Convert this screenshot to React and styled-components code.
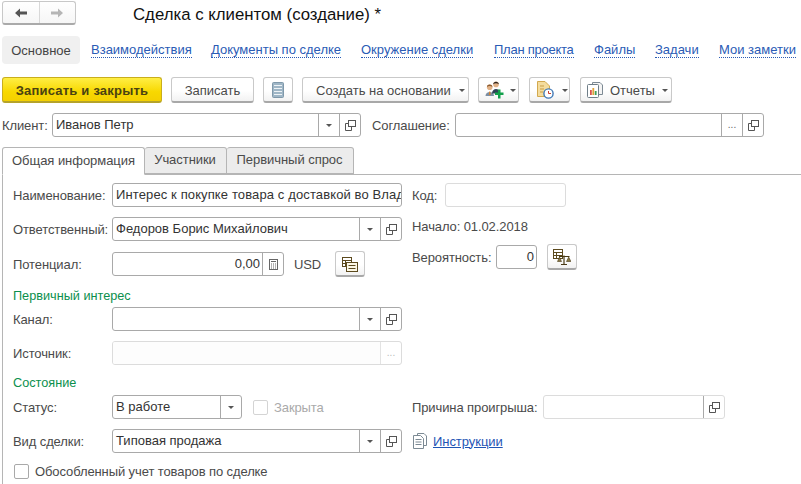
import React from "react";
import styled, { createGlobalStyle, css } from "styled-components";

const Global = createGlobalStyle`
  html, body { margin: 0; padding: 0; background: #fff; }
  body { font-family: "Liberation Sans", Arial, sans-serif; font-size: 13px; color: #4a4a4a; }
  #root { width: 801px; height: 484px; overflow: hidden; }
`;

const Page = styled.div`
  width: 801px; height: 484px; overflow: hidden; display: flex; flex-direction: column; padding: 1px 0 0 2px; box-sizing: border-box;
`;
const Header = styled.header`
  display: flex; align-items: center; height: 24px;
`;
const NavPair = styled.div`
  display: flex; width: 74px; height: 24px; box-sizing: border-box; border: 1px solid #c8c8c8; border-bottom: 2px solid #aaa; border-radius: 3px;
  background: linear-gradient(#fff, #f6f6f6);
`;
const NavCell = styled.div`
  flex: 1; display: flex; align-items: center; justify-content: center;
  ${p => p.$divider && css`border-right: 1px solid #d8d8d8;`}
`;
const Title = styled.h1`
  margin: 0 0 0 57px; font-size: 16.8px; font-weight: 400; color: #111; white-space: nowrap; position: relative; top: 2px;
`;
const Nav = styled.nav`
  display: flex; align-items: center; height: 28px; margin-top: 11px;
`;
const ActivePage = styled.div`
  width: 78px; height: 28px; margin-right: 11px; background: #f0f0f0; border-radius: 4px; display: flex; align-items: center; justify-content: center; color: #444; font-size: 13px; flex: none;
`;
const NavItem = styled.div`
  width: ${p => p.$w}px; flex: none;
`;
const NavLink = styled.a`
  display: inline-block; color: #2a5bb5; font-size: 13px; white-space: nowrap; line-height: 14px; border-bottom: 1px dotted #2a5bb5; letter-spacing: ${p => p.$ls || 0}px;
`;
const Toolbar = styled.div`
  display: flex; align-items: flex-start; height: 26px; margin-top: 13px;
`;
const Btn = styled.button`
  box-sizing: border-box; width: ${p => p.$w}px; height: ${p => p.$h || 26}px; margin-left: ${p => p.$ml || 0}px; flex: none;
  padding: 1px 0 0 ${p => p.$pl || 0}px;
  display: flex; align-items: center; justify-content: ${p => p.$pl ? "flex-start" : "center"}; gap: ${p => p.$gap || 0}px;
  font: 13px "Liberation Sans", Arial, sans-serif; color: #4a4a4a; white-space: nowrap;
  border: 1px solid #c9c9c9; border-bottom: 2px solid #a8a8a8; border-radius: 3px;
  background: linear-gradient(#fff 55%, #f2f2f2);
`;
const Primary = styled(Btn)`
  font-weight: 700; color: #4a4212; letter-spacing: .2px; border: 1px solid #c9ae1c; border-bottom: 2px solid #b5a32a;
  background: linear-gradient(#ffee45, #f8d800 60%, #f4d000);
`;
const Caret = styled.span`
  width: 0; height: 0; border-left: 3.5px solid transparent; border-right: 3.5px solid transparent; border-top: 3.5px solid ${p => p.$c || "#555"}; flex: none;
`;
const TopFields = styled.div`
  display: flex; align-items: center; height: 24px; margin-top: 10px;
`;
const Label = styled.span`
  color: #4a4a4a; font-size: 13px; letter-spacing: -.1px; white-space: nowrap; flex: none; width: ${p => p.$w ? p.$w + "px" : "auto"};
  margin-left: ${p => p.$ml || 0}px; ${p => p.$faded && "color:#aaa;"}
`;
const Field = styled.div`
  box-sizing: border-box; display: flex; width: ${p => p.$w}px; height: 24px; flex: none; margin-left: ${p => p.$ml || 0}px;
  border: 1px solid ${p => p.$disabled ? "#dcdcdc" : "#a9a9a9"}; border-radius: 3px; background: #fff; overflow: hidden;
`;
const Value = styled.div`
  flex: 1; min-width: 0; padding: 0 ${p => p.$right ? 2 : 0}px 0 3px; line-height: 22px; color: #333; font-size: 13px; white-space: nowrap; overflow: hidden;
  letter-spacing: ${p => p.$ls || 0}px;
  text-align: ${p => p.$right ? "right" : "left"}; ${p => p.$disabled && "background:#fdfdfd;"}
`;
const FieldBtn = styled.div`
  flex: none; width: 21px; display: flex; align-items: center; justify-content: center; border-left: 1px solid ${p => p.$faded ? "#e3e3e3" : "#a9a9a9"};
  color: ${p => p.$faded ? "#bbb" : "#666"}; font-size: 10px; line-height: 26px; box-sizing: border-box;
`;
const Tabs = styled.div`
  display: flex; align-items: flex-end; height: 28px; margin-top: 10px; border-bottom: 1px solid #b5b5b5; box-sizing: border-box;
`;
const Tab = styled.div`
  box-sizing: border-box; width: ${p => p.$w}px; height: ${p => p.$active ? 28 : 27}px; display: flex; align-items: center; justify-content: center; color: #4a4a4a; font-size: 13px; letter-spacing: -.05px;
  border: 1px solid #b5b5b5; border-left-width: ${p => p.$first ? 1 : 0}px; border-radius: 3px 3px 0 0; padding: 0 ${p => p.$first ? 0 : 1}px 2px 0; white-space: nowrap;
  background: ${p => p.$active ? "#fff" : "#ececec"}; ${p => p.$active && "border-bottom: 1px solid #fff; margin-bottom: -1px;"}
`;
const Panel = styled.div`
  flex: 1; display: flex; border-left: 1px solid #b5b5b5; padding: 8px 0 0 10px;
`;
const LeftCol = styled.div`
  width: 390px; flex: none; display: flex; flex-direction: column;
`;
const RightCol = styled.div`
  flex: 1; display: flex; flex-direction: column; padding-left: 9px;
`;
const Row = styled.div`
  display: flex; align-items: center; height: ${p => p.$h || 24}px; margin-top: ${p => p.$mt || 0}px;
`;
const Group = styled.div`
  color: #0b8f4d; font-size: 12.7px; line-height: 14px; margin-top: ${p => p.$mt}px;
`;
const Check = styled.span`
  box-sizing: border-box; width: 15px; height: 15px; flex: none; border: 1px solid ${p => p.$faded ? "#d4d4d4" : "#a9a9a9"}; border-radius: 2px; background: #fff; margin-left: ${p => p.$ml || 0}px; margin-right: 6px;
`;
const DocIconSlot = styled.span`
  display: flex; margin-left: 1px;
`;
const DocLink = styled.a`
  color: #1f55b5; font-size: 13px; letter-spacing: -.05px; text-decoration: underline; margin-left: 6px;
`;

const Arrow = ({ dir, color }) => (
  <svg width="14" height="12" viewBox="0 0 14 12" style={{ transform: dir === "r" ? "scaleX(-1)" : "none" }}>
    <path d="M1 6 L6 1.5 V4.5 H13 V7.5 H6 V10.5 Z" fill={color} />
  </svg>
);
const OpenIcon = ({ c = "#555" }) => (
  <svg width="11" height="11" viewBox="0 0 11 11" fill="none" stroke={c}>
    <rect x="3.5" y="0.5" width="7" height="6" fill="#fff" />
    <path d="M3 3.5 H0.5 V10.5 H6.5 V7" />
  </svg>
);
const ListIcon = () => (
  <svg width="12" height="16" viewBox="0 0 12 16">
    <rect x="0.5" y="0.5" width="11" height="15" rx="1" fill="#9fb6c6" stroke="#7f98aa" />
    <path d="M2 3.5H10M2 6.5H10M2 9.5H10M2 12.5H10" stroke="#eef3f6" strokeWidth="1.2" />
  </svg>
);
const PeopleIcon = () => (
  <svg width="19" height="18" viewBox="0 0 19 18">
    <path d="M0.5 15 C0.5 9.5 9 9.5 9 15 Z" fill="#7d8fa3" />
    <path d="M4.2 10.5H5.3L5.6 14H3.9Z" fill="#d9822b" />
    <circle cx="4.7" cy="6.3" r="2.8" fill="#e2b287" />
    <path d="M2 6 C2 2.8 7.4 2.8 7.4 6 C6 4.8 3.5 4.8 2 6Z" fill="#8a5a2f" />
    <path d="M7 12.5 C7 6.5 15 6.5 15 12.5 Z" fill="#2f4358" />
    <circle cx="11" cy="3.4" r="2.8" fill="#e2b287" />
    <path d="M8.2 3.2 C8.2 -0.2 13.8 -0.2 13.8 3.2 C12.3 2 9.7 2 8.2 3.2Z" fill="#2b2420" />
    <path d="M10 11.6H13V8.6H15.5V11.6H18.5V14H15.5V17.5H13V14H10Z" fill="#12a04b" />
  </svg>
);
const DocClockIcon = () => (
  <svg width="17" height="18" viewBox="0 0 17 18">
    <path d="M0.5 0.5H8L12.5 5V15.5H0.5Z" fill="#f4dc9d" stroke="#d2a94f" />
    <path d="M3 5H7M3 8H7M3 11H6" stroke="#c99d45" />
    <circle cx="11.5" cy="12.5" r="4.6" fill="#fff" stroke="#3f78b5" strokeWidth="1.4" />
    <path d="M11.5 10V12.5H14" stroke="#c8402f" fill="none" />
  </svg>
);
const ReportIcon = () => (
  <svg width="16" height="16" viewBox="0 0 16 16">
    <path d="M5.5 0.5H13L15.5 3V12.5H5.5Z" fill="#f4f4f4" stroke="#7d8a94" />
    <rect x="0.5" y="2.5" width="11" height="13" rx="1" fill="#fff" stroke="#6f7e88" />
    <rect x="3" y="8" width="1.8" height="5" fill="#d9534f" />
    <rect x="5.4" y="6" width="1.8" height="7" fill="#e0a33a" />
    <rect x="7.8" y="9" width="1.8" height="4" fill="#3f9e58" />
  </svg>
);
const CalcIcon = () => (
  <svg width="9" height="11" viewBox="0 0 9 11">
    <rect x="0.5" y="0.5" width="8" height="10" fill="#fff" stroke="#666" />
    <path d="M2 2.5H7" stroke="#666" />
    <path d="M2 5H3M4 5H5M6 5H7M2 7H3M4 7H5M6 7H7M2 9H3M4 9H5M6 9H7" stroke="#666" />
  </svg>
);
const CurrencyIcon = () => (
  <svg width="16" height="15" viewBox="0 0 16 15" fill="none">
    <rect x="0.5" y="0.5" width="9" height="9" fill="#fff" stroke="#5c4a1e" />
    <path d="M0.5 3.5H9.5M0.5 6.5H9.5M3.5 3.5V9.5" stroke="#5c4a1e" />
    <rect x="4.5" y="5.5" width="11" height="9" fill="#fdf8e6" stroke="#5c4a1e" />
    <path d="M6.5 8.5H13.5M6.5 11.5H13.5" stroke="#5c4a1e" />
  </svg>
);
const ScalesIcon = () => (
  <svg width="18" height="17" viewBox="0 0 18 17" fill="none">
    <rect x="0.5" y="0.5" width="9" height="9" fill="#fff" stroke="#5c4a1e" />
    <path d="M0.5 3.5H9.5M0.5 6.5H9.5M3.5 3.5V9.5" stroke="#5c4a1e" />
    <path d="M11 6.5V15M6 7.5H16.5M8 15.5H14" stroke="#4a3b16" strokeWidth="1.2" />
    <path d="M4.5 12.5L6.5 8L8.5 12.5ZM13.5 12.5L15.7 8L17.9 12.5Z" fill="#8a7a45" stroke="#4a3b16" strokeWidth=".6" />
  </svg>
);
const PagesIcon = () => (
  <svg width="14" height="16" viewBox="0 0 14 16" fill="none" stroke="#7c8a94">
    <path d="M4.5 2.5V0.5H11L13.5 3V12.5H11" />
    <path d="M0.5 2.5H7.5L10.5 5.5V15.5H0.5Z" fill="#fff" />
    <path d="M2.5 6.5H8.5M2.5 9H8.5M2.5 11.5H8.5" />
  </svg>
);

const Dropdown = () => <FieldBtn><Caret /></FieldBtn>;
const Open = ({ faded }) => <FieldBtn $faded={faded}><OpenIcon /></FieldBtn>;

const links = [
  ["Взаимодействия", 120], ["Документы по сделке", 150], ["Окружение сделки", 133], ["План проекта", 100, -0.25],
  ["Файлы", 61], ["Задачи", 64], ["Мои заметки", 76],
];

export default function App() {
  return (
    <Page>
      <Global />
      <Header>
        <NavPair>
          <NavCell $divider><Arrow color="#555" /></NavCell>
          <NavCell><Arrow dir="r" color="#b5b5b5" /></NavCell>
        </NavPair>
        <Title>Сделка с клиентом (создание) *</Title>
      </Header>
      <Nav>
        <ActivePage>Основное</ActivePage>
        {links.map(([t, w, ls]) => <NavItem key={t} $w={w}><NavLink $ls={ls}>{t}</NavLink></NavItem>)}
      </Nav>
      <Toolbar>
        <Primary $w={160}>Записать и закрыть</Primary>
        <Btn $w={83} $ml={9}>Записать</Btn>
        <Btn $w={30} $ml={9}><ListIcon /></Btn>
        <Btn $w={167} $ml={9} $pl={13} $gap={8}>Создать на основании <Caret /></Btn>
        <Btn $w={41} $ml={9} $pl={6} $gap={6}><PeopleIcon /><Caret /></Btn>
        <Btn $w={41} $ml={10} $pl={7} $gap={8}><DocClockIcon /><Caret /></Btn>
        <Btn $w={92} $ml={10} $pl={6} $gap={7}><ReportIcon /><span>Отчеты</span><Caret /></Btn>
      </Toolbar>
      <TopFields>
        <Label $w={50}>Клиент:</Label>
        <Field $w={309}><Value>Иванов Петр</Value><Dropdown /><Open /></Field>
        <Label $w={83} $ml={11}>Соглашение:</Label>
        <Field $w={309}><Value /><FieldBtn>...</FieldBtn><Open /></Field>
      </TopFields>
      <Tabs>
        <Tab $w={143} $active $first>Общая информация</Tab>
        <Tab $w={82}>Участники</Tab>
        <Tab $w={127}>Первичный спрос</Tab>
      </Tabs>
      <Panel>
        <LeftCol>
          <Row>
            <Label $w={99}>Наименование:</Label>
            <Field $w={290}><Value $ls={0.12}>Интерес к покупке товара с доставкой во Влад</Value></Field>
          </Row>
          <Row $mt={10}>
            <Label $w={99}>Ответственный:</Label>
            <Field $w={290}><Value>Федоров Борис Михайлович</Value><Dropdown /><Open /></Field>
          </Row>
          <Row $mt={11}>
            <Label $w={99}>Потенциал:</Label>
            <Field $w={172}><Value $right>0,00</Value><FieldBtn><CalcIcon /></FieldBtn></Field>
            <Label $ml={10}>USD</Label>
            <Btn $w={30} $ml={14}><CurrencyIcon /></Btn>
          </Row>
          <Group $mt={13}>Первичный интерес</Group>
          <Row $mt={4}>
            <Label $w={99}>Канал:</Label>
            <Field $w={290}><Value /><Dropdown /><Open /></Field>
          </Row>
          <Row $mt={10}>
            <Label $w={99}>Источник:</Label>
            <Field $w={290} $disabled><Value $disabled /><FieldBtn $faded>...</FieldBtn></Field>
          </Row>
          <Group $mt={11}>Состояние</Group>
          <Row $mt={5}>
            <Label $w={99}>Статус:</Label>
            <Field $w={130}><Value>В работе</Value><Dropdown /></Field>
            <Check $faded $ml={11} />
            <Label $faded>Закрыта</Label>
          </Row>
          <Row $mt={10}>
            <Label $w={99}>Вид сделки:</Label>
            <Field $w={290}><Value>Типовая продажа</Value><Dropdown /><Open /></Field>
          </Row>
          <Row $mt={11} $h={15}>
            <Check $ml={1} />
            <Label>Обособленный учет товаров по сделке</Label>
          </Row>
        </LeftCol>
        <RightCol>
          <Row>
            <Label $w={33}>Код:</Label>
            <Field $w={121} $disabled />
          </Row>
          <Row $mt={7} $h={24}><Label>Начало: 01.02.2018</Label></Row>
          <Row $mt={6} $h={26}>
            <Label $w={84}>Вероятность:</Label>
            <Field $w={41}><Value $right>0</Value></Field>
            <Btn $w={30} $ml={10}><ScalesIcon /></Btn>
          </Row>
          <Row $mt={125}>
            <Label $w={131}>Причина проигрыша:</Label>
            <Field $w={182} $disabled><Value /><FieldBtn><OpenIcon /></FieldBtn></Field>
          </Row>
          <Row $mt={10}>
            <DocIconSlot><PagesIcon /></DocIconSlot>
            <DocLink>Инструкции</DocLink>
          </Row>
        </RightCol>
      </Panel>
    </Page>
  );
}
